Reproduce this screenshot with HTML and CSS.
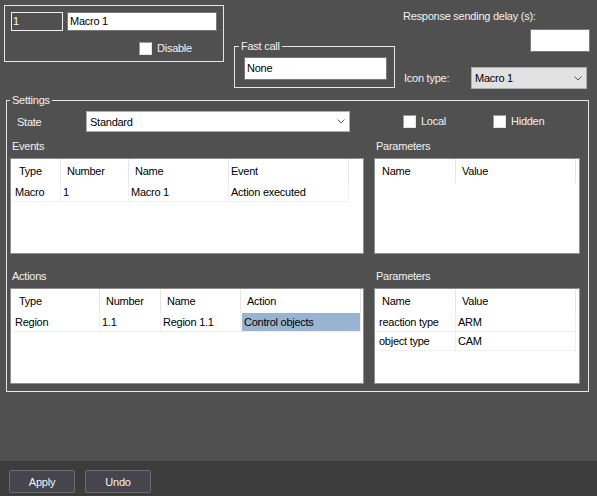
FILE: index.html
```html
<!DOCTYPE html>
<html lang="en">
<head>
    <meta charset="UTF-8">
    <title>Macro settings</title>
    <link rel="stylesheet" href="styles.css">
</head>
<body>
    <div class="content">
        <div class="top">
            <!-- Number / name -->
            <div class="ident">
                <div class="ident-row">
                    <span class="field field-dark num">1</span>
                    <span class="field name">Macro 1</span>
                </div>
                <div class="check disable"><span class="box"></span>Disable</div>
            </div>

            <fieldset class="group fastcall">
                <legend>Fast call</legend>
                <span class="field fast">None</span>
            </fieldset>

            <div class="right-col">
                <div class="delay-label">Response sending delay (s):</div>
                <span class="field delay"></span>
                <div class="icon-row">
                    <span class="icon-label">Icon type:</span>
                    <span class="combo combo-grey">Macro 1
                        <svg class="chev" width="8" height="5" viewBox="0 0 8 5"><polyline points="0.5,0.5 4,4 7.5,0.5" fill="none" stroke="#555" stroke-width="1"/></svg>
                    </span>
                </div>
            </div>
        </div>

        <fieldset class="group settings">
            <legend>Settings</legend>
            <div class="state-row">
                <span class="state-label">State</span>
                <span class="combo state-combo">Standard
                    <svg class="chev" width="8" height="5" viewBox="0 0 8 5"><polyline points="0.5,0.5 4,4 7.5,0.5" fill="none" stroke="#555" stroke-width="1"/></svg>
                </span>
                <div class="check local"><span class="box"></span>Local</div>
                <div class="check"><span class="box"></span>Hidden</div>
            </div>

            <div class="panels">
                <div class="panel">
                    <div class="panel-title">Events</div>
                    <div class="list events">
                        <div class="list-head">
                            <span>Type</span><span>Number</span><span>Name</span><span class="tight">Event</span>
                        </div>
                        <div class="list-row">
                            <span>Macro</span><span>1</span><span>Macro 1</span><span>Action executed</span>
                        </div>
                    </div>
                </div>
                <div class="panel">
                    <div class="panel-title">Parameters</div>
                    <div class="list params">
                        <div class="list-head">
                            <span>Name</span><span>Value</span>
                        </div>
                    </div>
                </div>
                <div class="panel">
                    <div class="panel-title">Actions</div>
                    <div class="list actions">
                        <div class="list-head">
                            <span>Type</span><span>Number</span><span>Name</span><span>Action</span>
                        </div>
                        <div class="list-row">
                            <span>Region</span><span>1.1</span><span>Region 1.1</span><span class="sel">Control objects</span>
                        </div>
                    </div>
                </div>
                <div class="panel">
                    <div class="panel-title">Parameters</div>
                    <div class="list params">
                        <div class="list-head">
                            <span>Name</span><span>Value</span>
                        </div>
                        <div class="list-row">
                            <span>reaction type</span><span>ARM</span>
                        </div>
                        <div class="list-row">
                            <span>object type</span><span>CAM</span>
                        </div>
                    </div>
                </div>
            </div>
        </fieldset>
    </div>

    <div class="footer">
        <button class="btn">Apply</button>
        <button class="btn">Undo</button>
    </div>
</body>
</html>
```

FILE: styles.css
```css
* {
    margin: 0;
    padding: 0;
    box-sizing: border-box;
}

body {
    width: 597px;
    height: 496px;
    overflow: hidden;
    display: flex;
    flex-direction: column;
    background-color: #505050;
    color: #f2f2f2;
    font-family: "Liberation Sans", Arial, sans-serif;
    font-size: 11px;
    letter-spacing: -0.25px;
}

.content {
    height: 461px;
}

/* Top area */
.top {
    display: flex;
    align-items: flex-start;
    height: 94px;
}

.ident {
    margin: 5px 0 0 4px;
    width: 220px;
    height: 57px;
    border: 1px solid #e6e6e6;
    padding: 6px 0 0 6px;
}

.ident-row {
    display: flex;
    gap: 4px;
}

.field {
    display: block;
    height: 19px;
    line-height: 17px;
    border: 1px solid #7a7a7a;
    background-color: #fff;
    color: #000;
    padding-left: 2px;
    white-space: nowrap;
}

.field-dark {
    background-color: #505050;
    border-color: #f0f0f0;
    color: #fff;
    padding-left: 1px;
}

.num {
    width: 52px;
}

.name {
    width: 150px;
}

/* Checkboxes */
.check {
    display: flex;
    align-items: center;
    gap: 5px;
    height: 13px;
    line-height: 13px;
}

.box {
    flex: none;
    width: 13px;
    height: 13px;
    background-color: #fff;
    border: 1px solid;
    border-color: #9a9a9a #e3e3e3 #e3e3e3 #9a9a9a;
}

.disable {
    margin: 11px 0 0 128px;
}

/* Group boxes */
.group {
    border: 1px solid #e6e6e6;
    min-width: 0;
}

.group legend {
    padding: 0 2px;
    line-height: 13px;
    color: #f2f2f2;
}

.fastcall {
    margin: 40px 0 0 10px;
    width: 161px;
    padding: 0 4px 7px 4px;
}

.fast {
    width: 143px;
    height: 23px;
    line-height: 21px;
    margin: 4px 0 0 5px;
}

.right-col {
    margin: 10px 0 0 8px;
    width: 187px;
}

.delay-label {
    line-height: 13px;
}

.delay {
    width: 60px;
    height: 23px;
    margin: 6px 0 0 auto;
}

.icon-row {
    display: flex;
    align-items: center;
    margin-top: 15px;
}

.icon-label {
    width: 68px;
    padding-left: 1px;
}

/* Combo boxes */
.combo {
    flex: none;
    display: flex;
    align-items: center;
    justify-content: space-between;
    height: 22px;
    border: 1px solid #adadad;
    background-color: #fff;
    color: #000;
    padding: 0 4px 0 3px;
    white-space: nowrap;
}

.combo-grey {
    width: 116px;
    background-color: #e1e1e1;
}

.chev {
    display: block;
}

/* Settings */
.settings {
    margin-left: 6px;
    width: 583px;
    padding: 0 8px 7px 3px;
}

.state-row {
    display: flex;
    align-items: center;
    height: 21px;
    margin-top: 4px;
}

.state-label {
    flex: none;
    width: 76px;
    padding-left: 7px;
}

.state-combo {
    width: 264px;
    height: 21px;
}

.state-row .local {
    flex: none;
    width: 90px;
    margin-left: 53px;
}

.panels {
    display: grid;
    grid-template-columns: 354px 206px;
    column-gap: 10px;
    row-gap: 16px;
    margin-top: 8px;
}

.panel-title {
    line-height: 13px;
    padding-left: 2px;
    margin-bottom: 5px;
}

/* List views */
.list {
    height: 96px;
    border: 1px solid #8e8e8e;
    background-color: #fff;
    color: #000;
    overflow: hidden;
}

.list-head,
.list-row {
    display: grid;
    width: max-content;
}

.events .list-head,
.events .list-row {
    grid-template-columns: 50px 68px 100px 120px;
}

.actions .list-head,
.actions .list-row {
    grid-template-columns: 89px 61px 80px 120px;
}

.params .list-head,
.params .list-row {
    grid-template-columns: 81px 120px;
}

.list span {
    white-space: nowrap;
    overflow: hidden;
}

.list-head span {
    height: 24px;
    line-height: 24px;
    padding-left: 6px;
    border-right: 1px solid #e5e5e5;
}

.list-head span:first-child {
    padding-left: 8px;
}

.params .list-head span:first-child {
    padding-left: 7px;
}

.list-head span.tight {
    padding-left: 2px;
}

.list-row {
    height: 19px;
    border-bottom: 1px solid #efefef;
}

.list-row span {
    line-height: 18px;
    padding-left: 2px;
    border-right: 1px solid #efefef;
}

.list-row span:first-child {
    padding-left: 4px;
}

.list-row span.sel {
    background-color: #99b4d1;
    box-shadow: inset 1px 0 0 #fff;
    padding-left: 3px;
}

/* Footer */
.footer {
    height: 35px;
    display: flex;
    gap: 10px;
    padding: 9px 0 0 9px;
    background-color: #3c3c3c;
}

.btn {
    width: 66px;
    height: 23px;
    background-color: #46454d;
    border: 1px solid #6c6c6c;
    border-radius: 2px;
    color: #f4f4f4;
    font-family: inherit;
    font-size: 11px;
    letter-spacing: -0.25px;
}
```
